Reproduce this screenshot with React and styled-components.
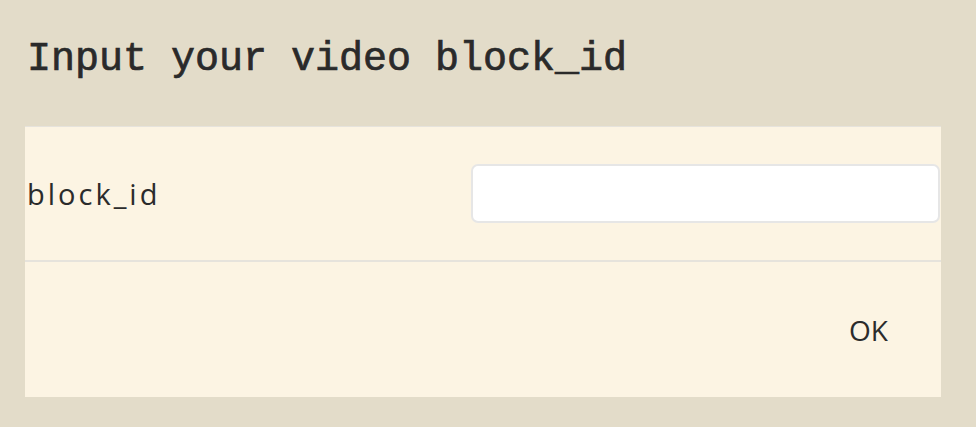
import styled, { createGlobalStyle } from "styled-components";

const Global = createGlobalStyle`
  html, body {
    margin: 0;
    padding: 0;
    background: #e3dcc9;
  }
  body {
    font-family: "Open Sans", sans-serif;
    color: #2b2b2b;
  }
`;

const Page = styled.div`
  padding: 36px 35px 30px 25px;
`;

const Title = styled.h1`
  margin: 0 0 42px 2px;
  font-family: "Liberation Mono", monospace;
  font-size: 40px;
  font-weight: 400;
  -webkit-text-stroke: 0.7px #2a2a2a;
  line-height: 48px;
  color: #2a2a2a;
`;

const Panel = styled.form`
  background: #fcf4e3;
  border-top: 1px solid #e6e3dc;
`;

const FieldRow = styled.div`
  display: grid;
  grid-template-columns: 1fr 470px;
  align-items: center;
  height: 133px;
  border-bottom: 2px solid #e6e3dc;
`;

const Label = styled.label`
  padding-left: 2px;
  font-size: 29px;
  letter-spacing: 3px;
  font-weight: 400;
`;

const TextInput = styled.input`
  box-sizing: border-box;
  width: 469px;
  height: 59px;
  border: 2px solid #e6e6e6;
  border-radius: 7px;
  background: #fff;
  outline: none;
`;

const Actions = styled.div`
  display: flex;
  justify-content: flex-end;
  align-items: center;
  height: 135px;
  padding-right: 53px;
`;

const OkButton = styled.button`
  border: none;
  background: none;
  padding: 0;
  font-family: "Open Sans", sans-serif;
  font-size: 28px;
  letter-spacing: 0;
  color: #2b2b2b;
  cursor: pointer;
`;

export default function App() {
  return (
    <>
      <Global />
      <Page>
        <Title>Input your video block_id</Title>
        <Panel onSubmit={(e) => e.preventDefault()}>
          <FieldRow>
            <Label htmlFor="block_id">block_id</Label>
            <TextInput id="block_id" type="text" />
          </FieldRow>
          <Actions>
            <OkButton type="submit">OK</OkButton>
          </Actions>
        </Panel>
      </Page>
    </>
  );
}
